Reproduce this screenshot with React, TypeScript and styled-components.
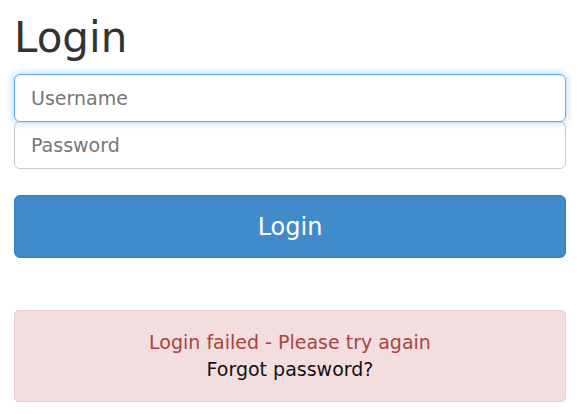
import React from 'react'
import styled, { createGlobalStyle } from 'styled-components';

const GlobalStyle = createGlobalStyle`
    html, body {
        margin: 0;
        padding: 0;
        background: #ffffff;
    }
    body {
        font-family: "DejaVu Sans", Verdana, sans-serif;
        color: #333333;
    }
    * {
        box-sizing: border-box;
    }
`;

const Page = styled.div`
        width: 583px;
        padding: 15px 17px 0 14px;
`;

const Title = styled.h1`
        margin: 0 0 13px 0;
        font-size: 42px;
        font-weight: 400;
        line-height: 46px;
        color: #333333;
`;

const Form = styled.form`
        display: flex;
        flex-direction: column;
`;

const Input = styled.input<{ $focused?: boolean }>`
        display: block;
        width: 100%;
        height: 48px;
        margin-bottom: -1px;
        padding: 0 16px;
        font-family: "DejaVu Sans", Verdana, sans-serif;
        font-size: 19px;
        color: #555555;
        background: #ffffff;
        border: 1px solid ${props => props.$focused ? '#66afe9' : '#cccccc'};
        border-radius: 6px;
        outline: none;
        position: relative;
        z-index: ${props => props.$focused ? 2 : 1};
        box-shadow: ${props => props.$focused
            ? 'inset 0 1px 1px rgba(0,0,0,.075), 0 0 8px rgba(102,175,233,.6)'
            : 'inset 0 1px 1px rgba(0,0,0,.075)'};
        &::placeholder {
            color: #777777;
        }
`;

const SubmitButton = styled.button`
        margin-top: 27px;
        width: 100%;
        height: 63px;
        font-family: "DejaVu Sans", Verdana, sans-serif;
        font-size: 24px;
        color: #ffffff;
        background: #428bca;
        border: 1px solid #357ebd;
        border-radius: 6px;
        cursor: pointer;
`;

const Alert = styled.div`
        margin-top: 52px;
        padding: 18px 15px;
        background: #f2dede;
        border: 1px solid #ebccd1;
        border-radius: 5px;
        text-align: center;
        font-size: 19px;
        line-height: 27px;
`;

const ErrorText = styled.div`
        color: #a94442;
`;

const ForgotLink = styled.div`
        color: #111111;
`;

function App() {
    return (
        <Page>
            <GlobalStyle />
            <Title>Login</Title>
            <Form onSubmit={e => e.preventDefault()}>
                <Input type="text" placeholder="Username" $focused />
                <Input type="password" placeholder="Password" />
                <SubmitButton type="submit">Login</SubmitButton>
            </Form>
            <Alert>
                <ErrorText>Login failed - Please try again</ErrorText>
                <ForgotLink>Forgot password?</ForgotLink>
            </Alert>
        </Page>
    )
}

export default App;
